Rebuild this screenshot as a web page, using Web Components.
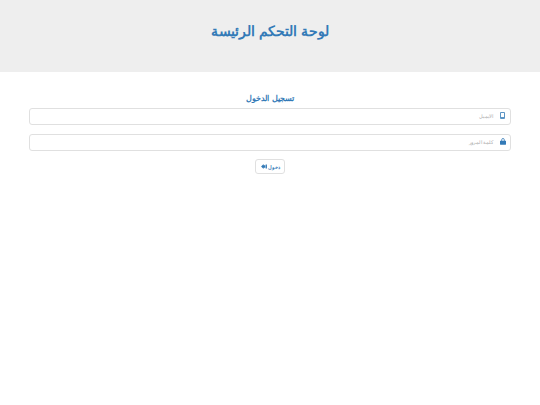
<!DOCTYPE html>
<html lang="ar" dir="rtl">
<head>
<meta charset="utf-8">
<title>لوحة التحكم الرئيسة</title>
<style>
html, body { margin: 0; background: #fff; font-family: "Liberation Sans", sans-serif; }
</style>
</head>
<body>
<page-header>لوحة التحكم الرئيسة</page-header>
<login-form heading="تسجيل الدخول">
  <icon-field placeholder="الايميل" icon="mobile"></icon-field>
  <icon-field placeholder="كلمة المرور" icon="lock"></icon-field>
  <login-button>دخول</login-button>
</login-form>
<script>
class PageHeader extends HTMLElement {
    constructor() {
        super();
        this.attachShadow({ mode: 'open' });
        this.shadowRoot.innerHTML = `
            <style>
                :host{
                    display: flex;
                    height: 72px;
                    box-sizing: border-box;
                    padding-top: 21px;
                    justify-content: center;
                    background-color: #eee;
                }
                h1{
                    margin: 0;
                    font-size: 14px;
                    line-height: 21px;
                    font-weight: bold;
                    color: #337ab7;
                }
            </style>
            <h1><slot></slot></h1>
        `;
    }
}
customElements.define('page-header', PageHeader);

class LoginForm extends HTMLElement {
    constructor() {
        super();
        this.attachShadow({ mode: 'open' });
    }

    connectedCallback() {
        const heading = this.getAttribute("heading");
        this.shadowRoot.innerHTML = `
            <style>
                :host{
                    display: flex;
                    flex-direction: column;
                    padding: 21px 29px 0;
                }
                h2{
                    margin: 0 0 3px;
                    font-size: 8px;
                    line-height: 12px;
                    font-weight: bold;
                    text-align: center;
                    color: #337ab7;
                }
            </style>
            <h2>${heading}</h2>
            <slot></slot>
        `;
    }
}
customElements.define('login-form', LoginForm);

const ICONS = {
    mobile: '<svg width="5" height="7" viewBox="0 0 5 7"><path fill="#337ab7" fill-opacity=".8" fill-rule="evenodd" d="M1 0h3a1 1 0 0 1 1 1v5a1 1 0 0 1-1 1H1a1 1 0 0 1-1-1V1a1 1 0 0 1 1-1zM1 1v4h3V1z"/></svg>',
    lock: '<svg width="6" height="7" viewBox="0 0 6 7"><path fill="none" stroke="#337ab7" stroke-width=".8" d="M1.700 3V1.800a1.300 1.300 0 0 1 2.600 0V3"/><rect y="2.700" width="6" height="4" rx=".4" fill="#337ab7"/></svg>'
};

class IconField extends HTMLElement {
    constructor() {
        super();
        this.attachShadow({ mode: 'open' });
    }

    connectedCallback() {
        const placeholder = this.getAttribute("placeholder");
        const icon = ICONS[this.getAttribute("icon")];
        this.shadowRoot.innerHTML = `
            <style>
                :host{
                    display: flex;
                    align-items: center;
                    height: 17px;
                    margin-bottom: 9px;
                    box-sizing: border-box;
                    border: 1px solid #e0e0e0;
                    border-radius: 3px;
                    background-color: #fff;
                }
                .icon{
                    display: flex;
                    justify-content: center;
                    width: 15px;
                    margin-bottom: 2px;
                }
                .text{
                    margin: 0 2px 1px 0;
                    font-size: 4.500px;
                    color: #aaa;
                }
            </style>
            <span class="icon">${icon}</span>
            <span class="text">${placeholder}</span>
        `;
    }
}
customElements.define('icon-field', IconField);

class LoginButton extends HTMLElement {
    constructor() {
        super();
        this.attachShadow({ mode: 'open' });
        this.shadowRoot.innerHTML = `
            <style>
                :host{
                    display: flex;
                    align-self: center;
                    align-items: center;
                    gap: 1px;
                    width: 30px;
                    height: 15px;
                    justify-content: center;
                    box-sizing: border-box;
                    margin-top: -1px;
                    border: 1px solid #e0e0e0;
                    border-radius: 3px;
                    font-size: 5px;
                    font-weight: bold;
                    color: #337ab7;
                }
            </style>
            <slot></slot>
            <svg width="6" height="5" viewBox="0 0 7 6"><path fill="#337ab7" d="M0 3l3-3v1.500h2v3H3V6zM5.500 .5H7v5H5.500z"/></svg>
        `;
    }
}
customElements.define('login-button', LoginButton);
</script>
</body>
</html>
